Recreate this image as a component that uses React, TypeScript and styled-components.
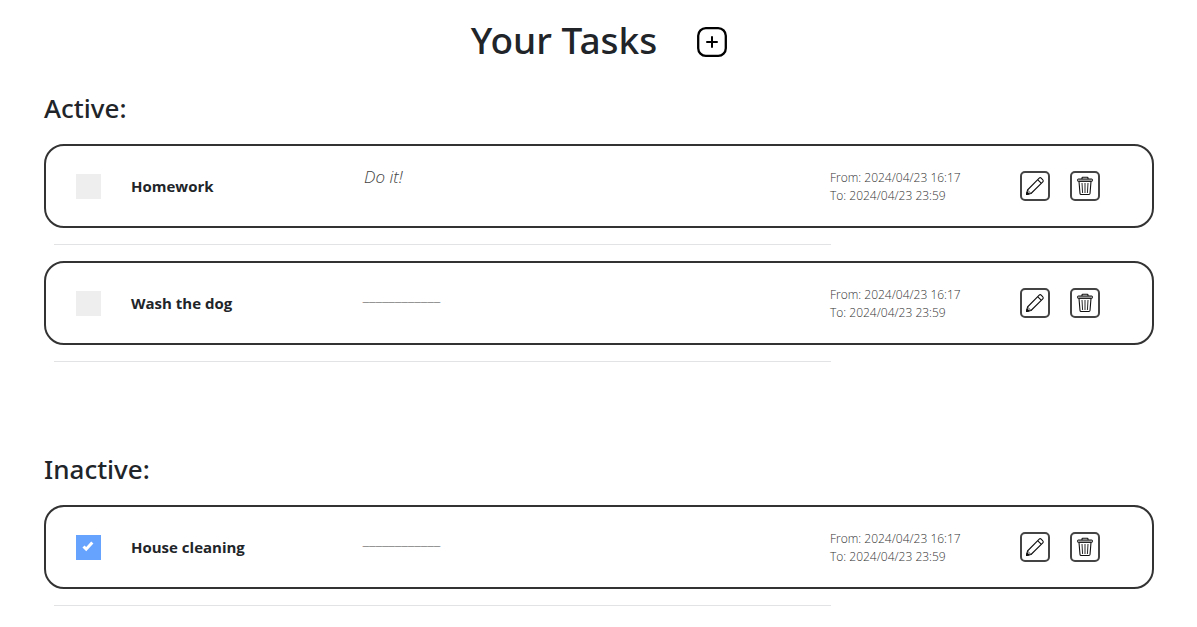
import React, { useState } from "react";
import styled, { createGlobalStyle } from "styled-components";

const GlobalStyle = createGlobalStyle`
  * { box-sizing: border-box; }
  body {
    margin: 0;
    background: #fff;
    color: #212529;
    font-family: "Segoe UI", "Open Sans", "Noto Sans", sans-serif;
    font-size: 15px;
    line-height: 24px;
  }
`;

const Page = styled.main`
  padding: 16px 43px 16px 44px;
`;

const Header = styled.header`
  display: flex;
  align-items: center;
  justify-content: center;
  gap: 40px;
  height: 48px;
`;

const Title = styled.h1`
  margin: 0;
  font-family: "Segoe UI", "Noto Sans", sans-serif;
  font-size: 37px;
  font-weight: 500;
  line-height: 48px;
`;

const AddButton = styled.button`
  width: 30px;
  height: 30px;
  margin-top: 4px;
  padding: 0;
  border: 0;
  background: none;
  color: #000;
  cursor: pointer;

  svg { display: block; }
`;

const Section = styled.section`
  margin-top: 27px;

  & + & { margin-top: 90px; }
`;

const SectionTitle = styled.h2`
  margin: 0 0 19px;
  font-family: "Segoe UI", "Noto Sans", sans-serif;
  font-size: 26px;
  font-weight: 500;
  line-height: 34px;
`;

const TaskList = styled.ul`
  margin: 0;
  padding: 0;
  list-style: none;
`;

const TaskItem = styled.li`
  & + & { margin-top: 16px; }
`;

const Card = styled.article`
  display: grid;
  grid-template-columns: 55px 1fr 2fr 190px auto;
  align-items: center;
  min-height: 84px;
  padding: 0 52px 0 30px;
  border: 2px solid #333;
  border-radius: 20px;
`;

const Divider = styled.hr`
  width: 70%;
  height: 1px;
  margin: 16px 0 0 10px;
  border: 0;
  background: #e2e3e4;
`;

const Check = styled.label`
  position: relative;
  display: block;
  width: 25px;
  height: 25px;
`;

const CheckInput = styled.input`
  display: block;
  appearance: none;
  width: 25px;
  height: 25px;
  margin: 0;
  background: #eee;
  cursor: pointer;

  &:checked { background: #66a3ff; }
`;

const CheckMark = styled.svg`
  position: absolute;
  top: 5px;
  left: 6px;
  pointer-events: none;
`;

const Name = styled.h3`
  margin: 0;
  font-size: 15px;
  font-weight: 700;
  line-height: 24px;
`;

const Description = styled.p`
  align-self: start;
  margin: 20px 0 0;
  color: #444;
  font-size: 17px;
  font-style: italic;
  font-weight: 300;
  line-height: 22px;
`;

const Dates = styled.p`
  margin: 0;
  padding-top: 2px;
  color: #333;
  font-size: 12px;
  font-weight: 300;
  line-height: 18px;
`;

const DateLine = styled.span`
  display: block;
`;

const Actions = styled.div`
  display: flex;
  gap: 20px;
`;

const IconButton = styled.button`
  display: flex;
  align-items: center;
  justify-content: center;
  width: 30px;
  height: 30px;
  padding: 0;
  border: 2px solid #444;
  border-radius: 5px;
  background: #fff;
  color: #111;
  cursor: pointer;
`;

const PlusIcon = () => (
  <svg width="30" height="30" viewBox="0 0 30 30" fill="none" stroke="currentColor" strokeLinecap="round" aria-hidden="true">
    <rect x="1.2" y="1.2" width="27.6" height="27.6" rx="7.6" strokeWidth="2.3" />
    <path d="M15 10v10M10 15h10" strokeWidth="2" />
  </svg>
);

const PencilIcon = () => (
  <svg width="20" height="20" viewBox="0 0 20 20" fill="none" stroke="currentColor" strokeWidth="1.1" strokeLinejoin="round" aria-hidden="true">
    <path d="M1.5 18.5l1-4.500L14.200 2.200q1-1 2 0l1.600 1.600q1 1 0 2L6 17.500z" />
    <path d="M12.800 3.800l3.400 3.400" />
    <path d="M2.500 14l3.500 3.500" strokeWidth=".8" />
    <path d="M1.500 18.500l.5-2.500 2 2z" fill="currentColor" />
  </svg>
);

const TrashIcon = () => (
  <svg width="18" height="20" viewBox="0 0 18 20" fill="none" stroke="currentColor" strokeLinejoin="round" aria-hidden="true">
    <path d="M6 3V2q0-.7.700-.7h4.600q.7 0 .7.700V3" strokeWidth="1.100" />
    <rect x="1.500" y="3" width="15" height="2.400" rx=".8" strokeWidth="1" fill="#aaa" />
    <path d="M3 5.500l1 12q.1 1 1.100 1h7.800q1 0 1.100-1l1-12" strokeWidth="1.100" />
    <path d="M6 7l.6 10M9 7v10M12 7l-.6 10" strokeWidth=".9" />
  </svg>
);

type Task = {
  id: number;
  name: string;
  description: string;
  from: string;
  to: string;
  done: boolean;
};

const EMPTY_DESCRIPTION = "_".repeat(12);

const initialTasks: Task[] = [
  { id: 1, name: "Homework", description: "Do it!", from: "2024/04/23 16:17", to: "2024/04/23 23:59", done: false },
  { id: 2, name: "Wash the dog", description: "", from: "2024/04/23 16:17", to: "2024/04/23 23:59", done: false },
  { id: 3, name: "House cleaning", description: "", from: "2024/04/23 16:17", to: "2024/04/23 23:59", done: true },
];

type TaskSectionProps = {
  title: string;
  tasks: Task[];
  onToggle: (id: number) => void;
  onDelete: (id: number) => void;
};

function TaskSection({ title, tasks, onToggle, onDelete }: TaskSectionProps) {
  return (
    <Section>
      <SectionTitle>{title}</SectionTitle>
      <TaskList>
        {tasks.map((task) => (
          <TaskItem key={task.id}>
            <Card>
              <Check htmlFor={`task-${task.id}`}>
                <CheckInput
                  id={`task-${task.id}`}
                  type="checkbox"
                  aria-label={task.name}
                  checked={task.done}
                  onChange={() => onToggle(task.id)}
                />
                {task.done && (
                  <CheckMark width="12" height="12" viewBox="0 0 12 12" aria-hidden="true">
                    <path d="M1.500 6.500l2.700 2.700L10.300 2.500" fill="none" stroke="#fff" strokeWidth="3" />
                  </CheckMark>
                )}
              </Check>
              <Name>{task.name}</Name>
              <Description>{task.description || EMPTY_DESCRIPTION}</Description>
              <Dates>
                <DateLine>From: {task.from}</DateLine>
                <DateLine>To: {task.to}</DateLine>
              </Dates>
              <Actions>
                <IconButton type="button" aria-label={`Edit ${task.name}`}>
                  <PencilIcon />
                </IconButton>
                <IconButton type="button" aria-label={`Delete ${task.name}`} onClick={() => onDelete(task.id)}>
                  <TrashIcon />
                </IconButton>
              </Actions>
            </Card>
            <Divider />
          </TaskItem>
        ))}
      </TaskList>
    </Section>
  );
}

export default function App() {
  const [tasks, setTasks] = useState(initialTasks);
  const toggle = (id: number) =>
    setTasks((all) => all.map((task) => (task.id === id ? { ...task, done: !task.done } : task)));
  const remove = (id: number) => setTasks((all) => all.filter((task) => task.id !== id));

  return (
    <>
      <GlobalStyle />
      <Page>
        <Header>
          <Title>Your Tasks</Title>
          <AddButton type="button" aria-label="Add task">
            <PlusIcon />
          </AddButton>
        </Header>
        <TaskSection title="Active:" tasks={tasks.filter((task) => !task.done)} onToggle={toggle} onDelete={remove} />
        <TaskSection title="Inactive:" tasks={tasks.filter((task) => task.done)} onToggle={toggle} onDelete={remove} />
      </Page>
    </>
  );
}
